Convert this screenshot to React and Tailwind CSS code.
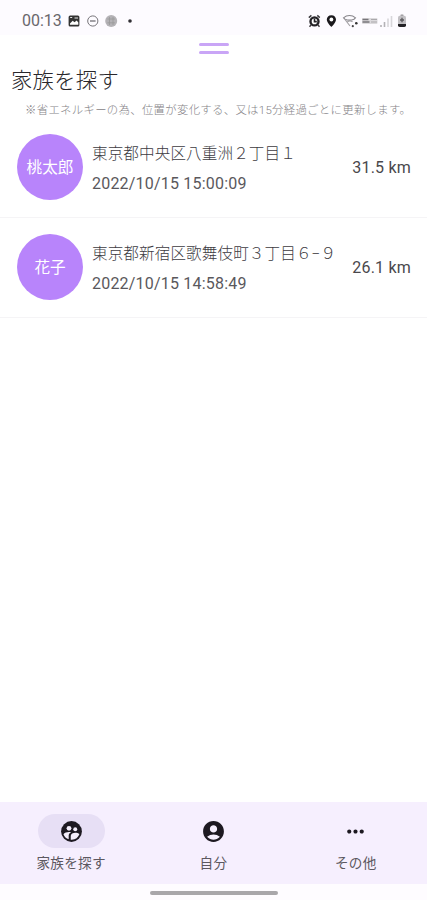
import { MdAccountCircle, MdMoreHoriz } from "react-icons/md";

const members = [
  { name: "桃太郎", address: "東京都中央区八重洲２丁目１", time: "2022/10/15 15:00:09", distance: "31.5 km" },
  { name: "花子", address: "東京都新宿区歌舞伎町３丁目６−９", time: "2022/10/15 14:58:49", distance: "26.1 km" },
];

function FamilyIcon({ size, color }) {
  return (
    <svg width={size} height={size} viewBox="0 0 24 24">
      <circle cx="12" cy="12" r="10" fill={color} />
      <g fill="#f4eefb">
        <circle cx="9.6" cy="8.9" r="2.3" />
        <circle cx="15.6" cy="9.8" r="1.9" />
        <path d="M4.3 14.6c.9-1.5 3.1-2.2 5.3-2.2.7 0 1.4.1 2 .2-1.7.9-2.300 2.100-2.300 3.300v3.600a8 8 0 0 1-5-4.900z" />
        <path d="M11.300 19.900v-3.800c0-1.900 2.300-2.800 4.300-2.800 1.500 0 3.100.4 4 1.200a8 8 0 0 1-8.300 5.400z" />
      </g>
    </svg>
  );
}

const tabs = [
  { label: "家族を探す", Icon: FamilyIcon, active: true },
  { label: "自分", Icon: MdAccountCircle },
  { label: "その他", Icon: MdMoreHoriz },
];

function StatusBar() {
  return (
    <header className="flex h-[35px] shrink-0 items-center justify-between bg-[#fdfbff] pt-[7px] pr-[20px] pl-[22px] text-[#69676c]">
      <div className="flex items-center">
        <span className="w-[46px] text-[16px] leading-5 whitespace-nowrap">00:13</span>
        <svg width="66" height="14" viewBox="0 0 66 14" fill="none">
          <rect x="0.6" y="1.6" width="10.8" height="10.8" rx="1.5" fill="#333" />
          <path d="M2 9.5l2.7-2.8 1.8 1.5 2.2-1.7 1.6 2v2.3H2z" fill="#fff" />
          <path d="M2.2 3.5h2M6.5 4h3.5" stroke="#fff" strokeWidth="0.9" />
          <circle cx="24.8" cy="7" r="5.1" stroke="#77757a" strokeWidth="1" />
          <path d="M22 7h5.6" stroke="#66646a" strokeWidth="1.2" />
          <circle cx="43.2" cy="7" r="6" fill="#b4b2b6" />
          <path d="M39.5 5h7.4M39.5 8.8h7.4M41.5 3v8M45 3v8" stroke="#999" strokeWidth="0.8" />
          <circle cx="62" cy="7" r="1.8" fill="#302e33" />
        </svg>
      </div>
      <svg width="99" height="14" viewBox="0 0 99 14" fill="none">
        {/* alarm */}
        <circle cx="6.5" cy="7.4" r="4" fill="#fff" stroke="#242226" strokeWidth="2.4" />
        <path d="M0.8 3.6L3.4 1.4M9.3 1.4l2.5 2.2M3.2 10.8l-1.7 2M9.8 10.8l1.7 2" stroke="#3a383c" strokeWidth="1.4" />
        <path d="M6.5 4.6v3h2.3" stroke="#242226" strokeWidth="1.6" />
        {/* location */}
        <path d="M23.4 1.2c-2.8 0-4.6 2-4.6 4.4 0 3.3 4.6 7.4 4.6 7.4S28 8.9 28 5.6c0-2.4-1.8-4.4-4.6-4.4z" fill="#1b191d" />
        <circle cx="23.4" cy="5.5" r="1.9" fill="#fff" />
        {/* wifi */}
        <path d="M35.5 3.8c3.5-3 8.5-3 12 0L46 5.2c-2.5 1-6.5 1-9 0z" stroke="#88868b" strokeWidth="1.1" />
        <path d="M37 5.5l5 6.5M39.5 7.8c1.4-1 3.6-1 5 0" stroke="#a4a2a6" strokeWidth="1.2" />
        <circle cx="44.8" cy="12.2" r="1.1" fill="#444" />
        <circle cx="48.3" cy="9.2" r="1.3" fill="#333" />
        {/* carrier mark */}
        <rect x="54" y="4" width="15.5" height="6" rx="1" fill="#dcdadd" />
        <path d="M54.5 5.5h6M54.5 8h7" stroke="#77757a" strokeWidth="1.3" />
        <path d="M63 5.5h6M63 8h6" stroke="#aaa8ac" strokeWidth="1.2" />
        {/* signal */}
        <path d="M73 13v-2M76.5 13V8" stroke="#b4b2b6" strokeWidth="1.6" />
        <path d="M80 13V4.5M83.5 13V2" stroke="#d8d6da" strokeWidth="1.6" />
        {/* battery */}
        <rect x="92.5" y="0.5" width="3" height="2" rx="0.5" fill="#99979b" />
        <rect x="90" y="1.8" width="8" height="11.2" rx="1.8" fill="#c2c0c4" />
        <path d="M90 10h8v1.2a1.8 1.8 0 0 1-1.8 1.8h-4.4A1.8 1.8 0 0 1 90 11.2z" fill="#242226" />
        <path d="M94 3.7v4.6M92 6h4" stroke="#59575b" strokeWidth="1.3" />
      </svg>
    </header>
  );
}

function MemberRow({ member }) {
  return (
    <li className="flex h-[100px] items-center border-b border-[#f5f4f6] pr-4 pb-[2px] pl-[17px]">
      <div className="flex size-[66px] shrink-0 items-center justify-center rounded-full bg-[#b884fb] pt-[5px] text-[15.6px] text-white">
        {member.name}
      </div>
      <div className="ml-[9px] flex-1 pt-[4px] whitespace-nowrap">
        <div className="text-[15.6px] leading-[30px] font-light tracking-[0.09px] text-[#3d3b3f]">{member.address}</div>
        <div className="text-[16px] leading-[30px] tracking-[0.2px] text-[#5a585c]">{member.time}</div>
      </div>
      <div className="pt-[3px] text-[16px] tracking-[0.2px] whitespace-nowrap text-[#4a484c]">{member.distance}</div>
    </li>
  );
}

function BottomNav() {
  return (
    <nav className="grid h-[82px] shrink-0 grid-cols-3 bg-[#f6effe]">
      {tabs.map(({ label, Icon, active }) => (
        <button key={label} className="flex flex-col items-center pt-3">
          <span className={`flex h-[34px] w-[67px] items-center justify-center rounded-full ${active ? "bg-[#e7dff5]" : ""}`}>
            <Icon size={25} color="#1d1921" />
          </span>
          <span className="mt-[5px] text-[13.6px] leading-5 tracking-[0.3px] text-[#5c5860]">{label}</span>
        </button>
      ))}
    </nav>
  );
}

export default function App() {
  return (
    <div className="flex h-screen w-full flex-col overflow-hidden bg-white font-['Roboto','Noto_Sans_CJK_JP',sans-serif]">
      <StatusBar />
      <main className="flex-1">
        <div className="flex flex-col items-center gap-[5px] pt-2 pl-px">
          <span className="h-[3px] w-[30px] rounded-full bg-[#c9a5f6]" />
          <span className="h-[3px] w-[30px] rounded-full bg-[#c9a5f6]" />
        </div>
        <h1 className="mt-[12px] pl-[11px] text-[21.3px] leading-[30px] font-light tracking-[0.3px] text-[#29272b]">家族を探す</h1>
        <p className="mt-[4px] pl-[25px] text-[11.4px] leading-5 font-light tracking-[0.3px] whitespace-nowrap text-[#858387]">
          ※省エネルギーの為、位置が変化する、又は15分経過ごとに更新します。
        </p>
        <ul className="-mt-[2px]">
          {members.map((member) => (
            <MemberRow key={member.name} member={member} />
          ))}
        </ul>
      </main>
      <BottomNav />
      <footer className="flex h-4 shrink-0 justify-center bg-[#fefcff] pt-[7px]">
        <span className="h-1 w-32 rounded-full bg-[#a9a7aa]" />
      </footer>
    </div>
  );
}
